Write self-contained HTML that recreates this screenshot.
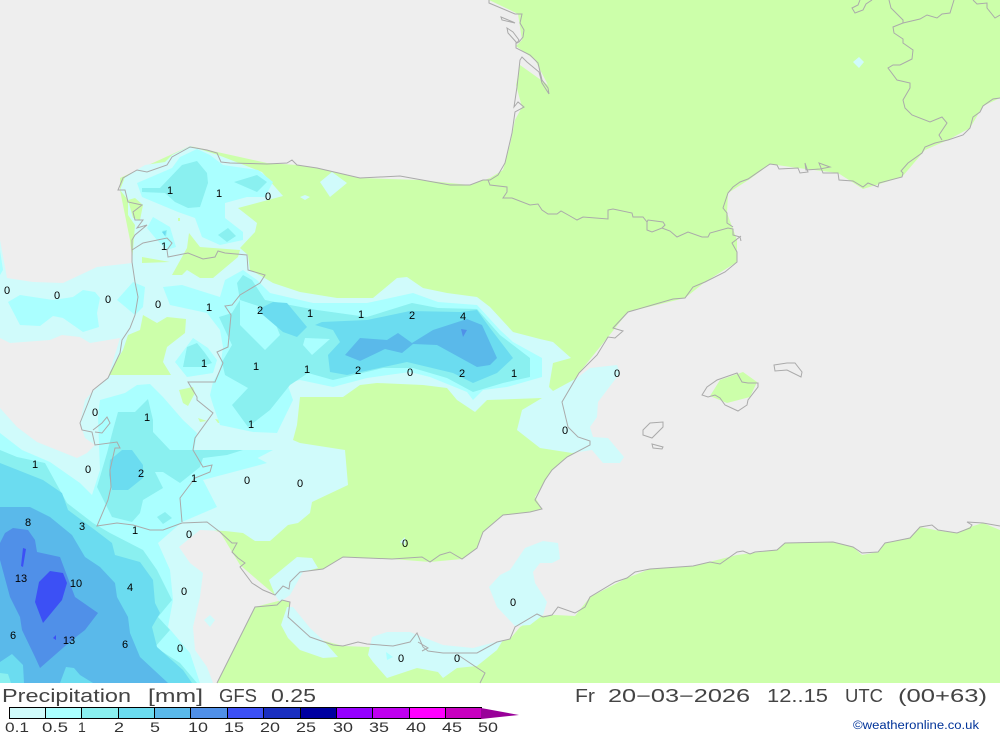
<!DOCTYPE html>
<html><head><meta charset="utf-8"><title>Precipitation GFS 0.25</title>
<style>html,body{margin:0;padding:0;background:#fff;width:1000px;height:733px;overflow:hidden}svg{display:block}
.l text{font:11px "Liberation Sans",sans-serif;fill:#000;text-anchor:middle}
.b text{font:14px "Liberation Sans",sans-serif;fill:#333}
.t text{font:18px "Liberation Sans",sans-serif;fill:#444}
</style></head><body>
<svg width="1000" height="733" viewBox="0 0 1000 733" xmlns="http://www.w3.org/2000/svg">
<rect width="1000" height="683" fill="#eeeeee"/>
<!-- land -->
<g fill="#ccffaa">
<polygon points="489,0 510,10 518,14 522,40 516,46 535,60 548,85 520,65 516,85 522,107 515,120 510,145 503,170 490,178 470,185 420,180 360,178 317,168 297,165 267,163 190,146 120,178 120,190 130,240 135,282 138,297 130,328 120,353 108,378 88,403 80,425 92,432 115,448 110,470 108,500 97,526 133,525 182,523 220,532 240,565 275,595 290,585 300,572 323,569 343,557 392,559 430,562 462,559 477,548 483,532 503,515 530,512 542,509 535,497 552,470 567,457 590,445 565,427 562,402 579,373 608,337 628,312 685,298 705,282 737,262 737,240 727,213 728,193 750,179 770,164 798,168 838,173 863,189 902,177 925,150 948,140 970,128 983,106 1000,98 1000,0"/>
<polygon points="217,683 255,607 282,600 290,602 288,617 310,637 343,646 393,648 423,647 477,653 500,642 510,639 520,627 540,616 555,615 575,616 590,597 627,578 650,569 693,566 737,555 777,550 785,543 833,542 853,547 862,555 878,552 885,543 910,538 920,527 940,531 957,533 970,527 983,523 1000,530 1000,683"/>
<polygon points="710,396 720,380 743,372 757,382 750,397 727,403"/>
</g>
<!-- 0.1 -->
<g fill="#d0fbfb">
<polygon points="125,177 145,165 165,162 172,155 190,146 218,155 262,172 283,196 238,208 257,223 255,232 240,248 248,255 250,270 263,277 273,283 300,292 337,298 373,298 397,278 407,277 423,288 447,293 477,297 490,307 513,332 540,339 553,342 571,358 553,363 549,387 553,391 577,378 590,368 617,365 620,373 598,402 597,417 590,427 593,437 608,438 624,457 620,463 603,463 592,450 572,453 540,448 517,430 522,410 542,398 487,400 475,412 457,400 447,388 423,385 377,383 360,385 343,397 300,397 297,425 293,440 300,443 345,450 348,485 312,502 310,513 298,523 288,525 270,541 255,541 243,533 225,531 200,530 179,547 190,563 203,573 200,597 193,627 195,650 207,667 213,683 0,683 0,240 7,278 33,282 63,283 97,267 132,263 135,225 128,215 128,200 120,190"/>
<polygon points="320,182 332,172 347,183 330,197"/>
<polygon points="300,197 305,195 310,197 305,200"/>
<polygon points="853,62 859,57 864,62 859,68"/>
<polygon points="489,587 500,575 510,570 525,548 543,541 558,543 560,559 552,563 540,563 533,572 535,583 547,602 543,615 530,625 515,626 497,607"/>
<polygon points="269,580 297,557 312,558 318,568 303,572 290,595 280,602 275,595 273,590"/>
<polygon points="293,607 310,628 323,640 338,657 323,658 300,650 288,638 281,625 287,607"/>
<polygon points="372,637 387,632 410,632 443,645 473,648 503,640 497,650 477,666 457,668 443,678 438,672 417,668 387,678 373,662 368,655"/>
<polygon points="210,615 215,620 210,627 204,620"/>
<polygon points="400,542 405,537 405,545"/>
</g>
<!-- green pockets -->
<g fill="#ccffaa">
<polygon points="189,233 200,247 240,250 238,257 213,278 200,278 187,270 182,275 172,275 182,257 187,248"/>
<polygon points="143,315 157,323 167,317 186,319 185,333 167,347 163,362 171,375 108,375 123,350 128,335 140,330"/>
<polygon points="142,257 170,262 142,263"/>
<polygon points="179,390 193,387 195,393 188,406 183,403"/>
<polygon points="198,418 207,421 200,422"/>
<polygon points="215,419 230,422 218,423"/>
<polygon points="128,200 135,198 143,205 140,220 133,218"/>
<polygon points="178,218 180,218 180,221 178,221"/>
</g>
<!-- grey pocket -->
<polygon fill="#eeeeee" points="0,338 10,343 50,340 62,335 80,337 90,343 120,338 108,378 92,392 85,400 80,423 85,438 95,445 87,453 77,458 37,442 17,427 0,408"/>
<!-- 0.5 -->
<g fill="#aaffff">
<polygon points="137,183 172,168 180,157 197,149 210,155 223,165 258,170 273,182 265,197 247,197 225,203 225,218 243,232 243,240 220,245 202,237 195,218 178,212 142,197"/>
<polygon points="153,217 170,227 176,247 167,250 157,240 147,228"/>
<polygon points="163,287 182,285 220,297 225,280 243,270 257,280 270,293 313,303 367,303 413,293 438,302 477,305 500,330 513,342 542,358 542,377 507,387 483,390 473,400 467,392 430,377 410,372 367,378 333,387 300,380 287,383 293,400 277,433 253,432 220,425 213,405 210,395 213,382 220,370 223,347 220,330 207,313 170,305"/>
<polygon points="175,362 193,338 208,348 217,360 213,373 187,377"/>
<polygon points="8,302 20,295 53,300 73,297 83,290 95,292 100,298 97,313 99,327 83,332 63,318 53,316 40,326 20,325"/>
<polygon points="117,300 133,282 145,287 143,307 135,315"/>
<polygon points="0,250 3,270 0,275"/>
<polygon points="0,433 22,450 50,462 80,483 92,495 100,470 98,417 100,400 125,393 137,385 150,384 163,397 183,420 197,433 193,457 243,450 267,463 203,480 217,507 182,522 158,543 170,570 173,600 168,627 190,653 200,683 0,683"/>
<polygon points="386,652 393,657 387,660"/>
<polygon points="273,450 250,462 240,450"/>
</g>
<!-- 1 -->
<g fill="#8af0f0">
<polygon points="142,188 160,188 182,165 197,161 207,173 208,183 200,207 188,208 175,202 165,193 142,192"/>
<polygon points="234,182 257,175 267,182 257,192"/>
<polygon points="218,235 228,228 236,236 227,242"/>
<polygon points="162,231 167,230 166,237"/>
<polygon points="183,367 187,347 197,343 205,353 212,363 200,367"/>
<polygon points="219,317 232,313 240,300 237,283 243,275 252,280 265,300 290,305 317,310 367,317 412,303 438,308 477,309 500,335 530,358 530,377 503,383 473,392 447,378 413,368 383,368 333,380 308,373 290,385 270,410 248,427 232,405 248,388 225,375 222,362 232,345"/>
<polygon points="0,450 17,457 45,463 67,503 93,523 110,533 143,550 157,570 172,600 158,617 170,630 155,647 180,663 197,683 0,683"/>
<polygon points="113,430 118,412 135,412 148,399 153,420 153,432 170,450 193,450 243,450 227,455 203,458 200,467 180,483 163,472 155,472 163,488 143,500 140,513 132,522 112,517 97,487 107,453"/>
<polygon points="157,517 165,512 172,518 163,524"/>
</g>
<!-- 0.5 holes -->
<g fill="#aaffff">
<polygon points="240,300 270,310 280,335 265,350 240,325"/>
<polygon points="305,338 330,339 312,355 303,345"/>
</g>
<!-- 2 -->
<g fill="#6bdcf0">
<polygon points="257,310 273,302 287,303 307,327 297,337 283,332 263,315"/>
<polygon points="315,325 322,322 367,320 410,311 460,312 477,310 490,328 513,358 497,373 473,383 453,373 407,362 347,375 330,372 328,355 340,342 333,330"/>
<polygon points="300,320 305,326 300,332"/>
<polygon points="110,460 122,450 132,450 143,465 143,478 128,490 112,490 109,475"/>
<polygon points="0,463 43,480 62,493 68,510 95,530 112,543 115,555 140,562 153,580 155,603 160,613 152,627 157,647 183,670 192,683 0,683"/>
<polygon points="162,232 166,231 165,236"/>
</g>
<!-- 5 -->
<g fill="#5ab9ea">
<polygon points="345,355 360,338 387,340 398,333 412,343 433,330 467,319 482,325 497,358 490,365 477,367 437,345 413,344 402,353 385,349 360,361"/>
<polygon points="0,507 30,507 50,517 72,535 85,557 100,567 115,583 117,597 128,617 130,633 140,657 168,683 0,683"/>
</g>
<polygon fill="#6bdcf0" points="0,662 12,654 23,665 24,683 0,683"/>
<polygon fill="#6bdcf0" points="60,683 66,667 74,668 80,675 93,683"/>
<polygon fill="#8af0f0" points="0,673 8,674 11,683 0,683"/>
<!-- 10 -->
<g fill="#5090e8">
<polygon points="0,543 5,533 13,528 28,530 35,540 37,552 60,557 75,597 98,613 85,630 72,640 40,668 35,657 22,630 20,617 10,597 0,560"/>
<polygon points="461,329 467,330 463,337"/>
</g>
<!-- 15 -->
<g fill="#3c50f5">
<polygon points="50,571 63,573 67,583 62,600 43,623 35,602 39,582"/>
<polygon points="23,548 26,549 23,567 21,566"/>
<polygon points="53,638 56,635 56,640"/>
</g>
<!-- coast -->
<g fill="none" stroke="#aaaaaa" stroke-width="1">
<path d="M489,0L489,3L515,14L522,14L520,23L524,30L523,37L519,42L516,43L516,48L530,55L538,63L542,80L548,88L549,94L542,83L539,72L527,62L522,57L520,60L517,87L514,107L518,102L524,107L515,112L512,133L505,163L498,175L490,180L483,180L470,185L450,185L400,176L360,178L317,168L297,165L292,160L287,163L267,164L230,163L221,162L217,153L207,150L190,147L172,157L167,165L147,172L137,170L123,178L118,190L125,190L128,202L142,205L133,212L135,220L143,220L137,228L147,225L135,235L132,240L132,262L135,282L138,297L135,315L130,328L122,340L120,353L108,378L93,390L88,403L80,423L82,430L92,432L95,445L117,442L120,448L115,448L110,470L111,487L108,500L97,526L117,523L133,525L150,530L163,530L182,523L207,522L220,532L232,543L237,543L232,552L238,558L245,563L240,567L252,583L263,590L275,595L283,586L289,589L290,582L300,572L323,569L343,557L392,559L422,557L430,562L440,555L450,552L462,559L477,548L483,532L503,515L530,512L542,509L535,500L545,480L552,470L567,457L590,445L590,441L578,437L568,427L562,402L579,373L597,355L608,337L615,338L623,331L613,328L628,312L673,299L685,298L693,287L705,282L725,272L737,262L737,252L732,243L741,236"/>
<path d="M95,432L102,433L110,423L107,417L102,423L93,430"/>
<path d="M501,17L513,22L515,23L502,20Z"/>
<path d="M507,28L513,32L519,40L517,43L508,33Z"/>
<path d="M488,180L490,185L507,187L507,192L503,198L512,198L530,205L538,204L542,210L548,214L557,214L561,211L570,216L577,220L583,217L608,219L608,210L613,209L632,213L633,217L643,217L647,222L647,230L652,232L662,228L670,231L677,237L688,232L702,237L708,237L710,233L728,228L733,229L733,235L740,237L741,241"/>
<path d="M647,222L648,220L663,222L665,225L662,228"/>
<path d="M733,227L727,223L727,213L723,208L728,193L733,187L740,182L748,179L770,164L777,165L779,169L798,168L800,173L808,172L805,163L806,170L820,169L830,167L819,163L823,173L838,173L839,180L853,181L863,187L868,183L878,187L879,183L902,177L903,173L901,171L908,163L922,153L925,147L935,143L948,140L963,135L970,128L973,117L980,112L983,106L993,99L1000,98"/>
<path d="M889,0L891,8L903,20L903,23L893,27L894,33L903,39L903,43L913,50L912,59L900,65L893,65L888,68L897,80L910,83L910,88L903,100L905,108L912,115L930,122L942,117L947,123L939,135L942,140"/>
<path d="M903,23L920,19L927,15L937,18L942,14L950,13L954,0"/>
<path d="M973,0L977,4L987,3L987,8L995,18L1000,15"/>
<path d="M860,0L858,5L852,8L855,13L863,10L866,4L872,0"/>
<path d="M132,250L143,243L167,238L172,243L167,250L168,257L188,253L203,259L215,257L218,251L225,253L247,255L248,270L265,275L260,283L240,295L232,305L225,306L231,315L228,347L217,352L223,363L215,382L188,382L197,397L197,400L213,413L195,438L193,450L203,467L212,465L210,472L195,478L180,498L182,522"/>
<path d="M702,395L707,387L717,380L737,373L742,382L748,383L758,383L758,387L748,400L747,405L738,411L725,405L720,398L715,395L708,397Z"/>
<path d="M774,365L787,363L795,363L802,372L801,377L787,370L775,371Z"/>
<path d="M643,430L650,423L663,422L663,427L652,438L643,435Z"/>
<path d="M652,444L663,447L662,449L653,448Z"/>
<path d="M217,683L255,607L277,605L282,600L290,602L288,617L310,637L333,645L343,646L358,642L367,644L393,646L410,642L417,633L423,647L428,651L443,653L477,653L497,642L510,639L515,627L537,614L543,617L552,615L558,607L575,613L585,607L590,597L615,582L627,578L635,572L650,569L693,566L710,562L720,564L737,552L743,551L750,554L755,552L777,550L785,543L833,542L853,547L862,553L878,552L885,543L910,538L920,527L932,525L938,530L957,533L970,528L972,525L967,522L983,523L1000,526"/>
<path d="M418,642L428,648L422,651"/>
<path d="M458,655L485,673L480,683"/>
</g>
<!-- map labels -->
<g class="l">
<text x="7" y="294">0</text><text x="57" y="299">0</text><text x="108" y="303">0</text><text x="158" y="308">0</text><text x="209" y="311">1</text><text x="260" y="314">2</text><text x="310" y="317">1</text><text x="361" y="318">1</text><text x="412" y="319">2</text><text x="463" y="320">4</text>
<text x="170" y="194">1</text><text x="219" y="197">1</text><text x="268" y="200">0</text><text x="164" y="250">1</text>
<text x="204" y="367">1</text><text x="256" y="370">1</text><text x="307" y="373">1</text><text x="358" y="374">2</text><text x="410" y="376">0</text><text x="462" y="377">2</text><text x="514" y="377">1</text><text x="617" y="377">0</text>
<text x="95" y="416">0</text><text x="147" y="421">1</text><text x="251" y="428">1</text><text x="565" y="434">0</text>
<text x="35" y="468">1</text><text x="88" y="473">0</text><text x="141" y="477">2</text><text x="194" y="482">1</text><text x="247" y="484">0</text><text x="300" y="487">0</text>
<text x="28" y="526">8</text><text x="82" y="530">3</text><text x="135" y="534">1</text><text x="189" y="538">0</text><text x="405" y="547">0</text>
<text x="21" y="582">13</text><text x="76" y="587">10</text><text x="130" y="591">4</text><text x="184" y="595">0</text><text x="513" y="606">0</text>
<text x="13" y="639">6</text><text x="69" y="644">13</text><text x="125" y="648">6</text><text x="180" y="652">0</text><text x="401" y="662">0</text><text x="457" y="662">0</text>
</g>
<!-- titles -->
<g class="t">
<text x="2" y="702" textLength="129" lengthAdjust="spacingAndGlyphs">Precipitation</text>
<text x="148" y="702" textLength="55" lengthAdjust="spacingAndGlyphs">[mm]</text>
<text x="219" y="702" textLength="38" lengthAdjust="spacingAndGlyphs">GFS</text>
<text x="271" y="702" textLength="45" lengthAdjust="spacingAndGlyphs">0.25</text>
<text x="575" y="702" textLength="20" lengthAdjust="spacingAndGlyphs">Fr</text>
<text x="608" y="702" textLength="142" lengthAdjust="spacingAndGlyphs">20−03−2026</text>
<text x="767" y="702" textLength="61" lengthAdjust="spacingAndGlyphs">12..15</text>
<text x="845" y="702" textLength="38" lengthAdjust="spacingAndGlyphs">UTC</text>
<text x="898" y="702" textLength="89" lengthAdjust="spacingAndGlyphs">(00+63)</text>
</g>
<text x="853" y="729" font-family="Liberation Sans, sans-serif" font-size="11.5" fill="#003399" textLength="126" lengthAdjust="spacingAndGlyphs">©weatheronline.co.uk</text>
<!-- legend -->
<g stroke="#000" stroke-width="1">
<rect x="9.5" y="707.5" width="36" height="11" fill="#d0fbfb"/>
<rect x="45.5" y="707.5" width="36" height="11" fill="#aaffff"/>
<rect x="81.5" y="707.5" width="37" height="11" fill="#8af0f0"/>
<rect x="118.5" y="707.5" width="36" height="11" fill="#6bdcf0"/>
<rect x="154.5" y="707.5" width="36" height="11" fill="#5ab9ea"/>
<rect x="190.5" y="707.5" width="37" height="11" fill="#5090e8"/>
<rect x="227.5" y="707.5" width="36" height="11" fill="#3c50f5"/>
<rect x="263.5" y="707.5" width="37" height="11" fill="#1a2fc0"/>
<rect x="300.5" y="707.5" width="36" height="11" fill="#0000a0"/>
<rect x="336.5" y="707.5" width="36" height="11" fill="#9600ff"/>
<rect x="372.5" y="707.5" width="37" height="11" fill="#c000f0"/>
<rect x="409.5" y="707.5" width="36" height="11" fill="#ff00ff"/>
<rect x="445.5" y="707.5" width="36" height="11" fill="#c800c0"/>
</g>
<polygon points="481,708 519,715 481,719" fill="#990099"/>
<g class="b">
<text x="5" y="732" textLength="24" lengthAdjust="spacingAndGlyphs">0.1</text>
<text x="42" y="732" textLength="26" lengthAdjust="spacingAndGlyphs">0.5</text>
<text x="78" y="732">1</text><text x="114" y="732" textLength="10" lengthAdjust="spacingAndGlyphs">2</text><text x="150" y="732" textLength="10" lengthAdjust="spacingAndGlyphs">5</text>
<text x="188" y="732" textLength="20" lengthAdjust="spacingAndGlyphs">10</text><text x="224" y="732" textLength="20" lengthAdjust="spacingAndGlyphs">15</text><text x="260" y="732" textLength="20" lengthAdjust="spacingAndGlyphs">20</text><text x="296" y="732" textLength="20" lengthAdjust="spacingAndGlyphs">25</text><text x="333" y="732" textLength="20" lengthAdjust="spacingAndGlyphs">30</text><text x="369" y="732" textLength="20" lengthAdjust="spacingAndGlyphs">35</text><text x="406" y="732" textLength="20" lengthAdjust="spacingAndGlyphs">40</text><text x="442" y="732" textLength="20" lengthAdjust="spacingAndGlyphs">45</text><text x="478" y="732" textLength="20" lengthAdjust="spacingAndGlyphs">50</text>
</g>
</svg>
</body></html>
